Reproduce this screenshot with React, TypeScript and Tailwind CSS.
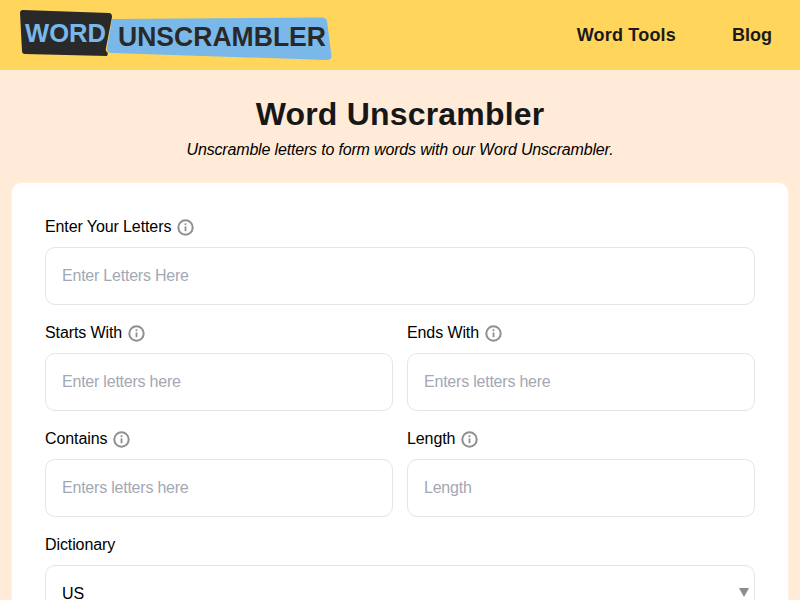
const InfoIcon = () => (
  <svg width="17" height="17" viewBox="0 0 17 17" fill="none" className="shrink-0">
    <circle cx="8.5" cy="8.5" r="7.2" stroke="#8f8f8f" strokeWidth="2" />
    <rect x="7.6" y="7.4" width="1.8" height="4.8" fill="#8f8f8f" />
    <rect x="7.6" y="4.3" width="1.8" height="1.8" fill="#8f8f8f" />
  </svg>
);

const Logo = () => (
  <svg width="312" height="50" viewBox="0 0 312 50" className="block">
    <path
      d="M92 9 L302 7.5 Q306 7.5 307 11 L311.5 46 Q311.5 50 307 50 L92 43 Q86 43 87 38 Z"
      fill="#79b8e8"
    />
    <path
      d="M3 0 L89 3 Q92 3 92 7 L86 38 Q85 41 88 43 L87 46 L5 44 Q2 44 2 41 L0 3 Q0 0 3 0 Z"
      fill="#292929"
    />
    <text x="5" y="32" fontFamily="Liberation Sans, Arial, sans-serif" fontSize="26.5" fontWeight="700" fill="#79b8e8" textLength="81" lengthAdjust="spacingAndGlyphs">
      WORD
    </text>
    <text x="98" y="36" fontFamily="Liberation Sans, Arial, sans-serif" fontSize="27" fontWeight="700" fill="#292929" textLength="208" lengthAdjust="spacingAndGlyphs">
      UNSCRAMBLER
    </text>
  </svg>
);

const Field = ({ label, placeholder }: { label: string; placeholder: string }) => (
  <div className="min-w-0">
    <div className="flex h-6 items-center gap-[5.5px] text-base tracking-[-0.1px] text-black">
      <span>{label}</span>
      <InfoIcon />
    </div>
    <input
      placeholder={placeholder}
      className="mt-2 block h-[58px] w-full rounded-[10px] border border-[#e5e5e5] bg-white px-4 text-base tracking-[-0.22px] text-black outline-none placeholder:text-[#a3a8b3]"
    />
  </div>
);

export default function App() {
  return (
    <div className="h-screen overflow-hidden bg-[#ffebd8] [font-family:'Liberation_Sans',Arial,sans-serif]">
      <header className="flex h-[70px] items-center justify-between bg-[#ffd55c] pl-[20px] pr-7">
        <Logo />
        <nav className="flex gap-[56px] text-lg font-bold text-[#1a1a1a]">
          <a className="tracking-[0.2px]">Word Tools</a>
          <a>Blog</a>
        </nav>
      </header>

      <div className="pt-[25px] text-center">
        <h1 className="text-[32px] leading-[38px] font-bold tracking-[0.19px] text-[#171717]">Word Unscrambler</h1>
        <p className="mt-[5px] text-base leading-6 tracking-[-0.17px] text-black italic">
          Unscramble letters to form words with our Word Unscrambler.
        </p>
      </div>

      <main className="mx-3 mt-[21px] rounded-[10px] bg-white px-[33px] pt-[32px] pb-8 shadow-[0_0_2px_#ffffff]">
        <Field label="Enter Your Letters" placeholder="Enter Letters Here" />
        <div className="mt-4 grid grid-cols-2 gap-x-[14px] gap-y-4">
          <Field label="Starts With" placeholder="Enter letters here" />
          <Field label="Ends With" placeholder="Enters letters here" />
          <Field label="Contains" placeholder="Enters letters here" />
          <Field label="Length" placeholder="Length" />
        </div>
        <div className="mt-4">
          <div className="flex h-6 items-center text-base tracking-[-0.1px] text-black">Dictionary</div>
          <div className="relative mt-2 flex h-[58px] items-center rounded-[10px] border border-[#e5e5e5] px-4 text-base text-black">
            US
            <span className="absolute right-[5px] top-[22px] h-0 w-0 border-x-[5px] border-t-[9px] border-x-transparent border-t-[#8c8c8c]" />
          </div>
        </div>
      </main>
    </div>
  );
}
